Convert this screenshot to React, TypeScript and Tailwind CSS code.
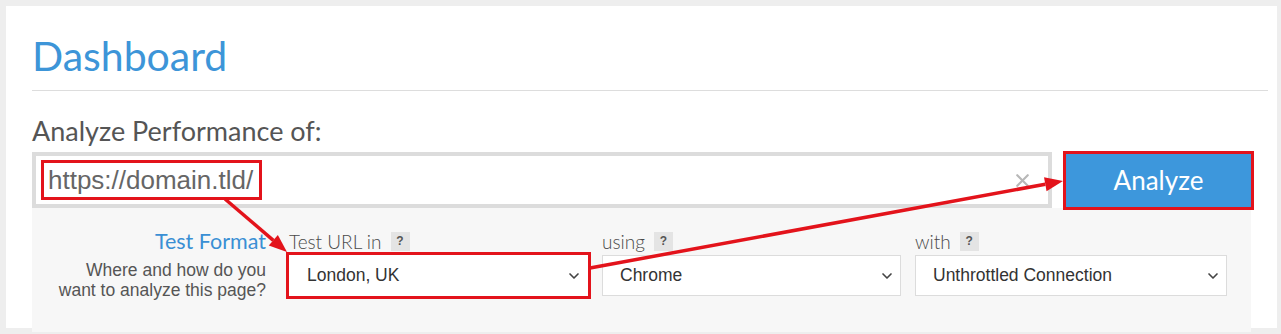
import { ChevronDown, X } from 'lucide-react';

const RED = '#e3131b';

function Help() {
  return (
    <span className="inline-flex items-center justify-center w-[19px] h-[19px] bg-[#e4e4e4] text-[#555] text-[12px] font-bold font-['Liberation_Sans',Arial,sans-serif] leading-none">
      ?
    </span>
  );
}

function Select({ label, value, width, marked }: { label: string; value: string; width: string; marked?: boolean }) {
  return (
    <div className={`flex flex-col gap-[4px] ${width}`}>
      <div className="flex items-center gap-[9px] h-[20px]">
        <span className="font-['Lato',sans-serif] font-light text-[19px] leading-none text-[#4a4a4a]">{label}</span>
        <Help />
      </div>
      <div
        className={`flex items-center justify-between h-[41px] bg-white pl-[17px] pr-[5px] ${
          marked ? 'outline-3 outline-[#e3131b] border border-transparent' : 'border border-[#dcdcdc]'
        }`}
      >
        <span className="font-['Liberation_Sans',Arial,sans-serif] text-[17.5px] text-[#333]">{value}</span>
        <ChevronDown size={16} strokeWidth={2.5} className="text-[#444]" />
      </div>
    </div>
  );
}

function Arrow({ x1, y1, x2, y2 }: { x1: number; y1: number; x2: number; y2: number }) {
  const a = Math.atan2(y2 - y1, x2 - x1);
  const len = 18;
  const w = 7;
  const bx = x2 - len * Math.cos(a);
  const by = y2 - len * Math.sin(a);
  const px = -Math.sin(a) * w;
  const py = Math.cos(a) * w;
  return (
    <g>
      <line x1={x1} y1={y1} x2={bx} y2={by} stroke={RED} strokeWidth={3.5} />
      <polygon points={`${x2},${y2} ${bx + px},${by + py} ${bx - px},${by - py}`} fill={RED} />
    </g>
  );
}

export default function App() {
  return (
    <div className="relative h-[334px] bg-[#eeeeee] pt-[6px] pl-[6px] pr-[4px] pb-[6px]">
      <div className="h-full bg-white pt-[29px] pl-[26px] pr-[26px]">
        <h1 className="font-['Lato',sans-serif] text-[41px] leading-none text-[#3d95d8]">Dashboard</h1>
        <div className="mt-[14px] h-px bg-[#dddddd] -mr-[17px]" />

        <div className="mt-[26px] font-['Lato',sans-serif] text-[27px] leading-none text-[#555]">
          Analyze Performance of:
        </div>

        <div className="mt-[8px] flex items-center">
          <div className="flex items-center justify-between w-[1020px] h-[56px] border-4 border-[#dcdcdc] bg-white pl-[8px] pr-[15px]">
            <span className="inline-block outline-3 outline-[#e3131b] pl-[4px] pr-[6px] py-[1px] font-['Liberation_Sans',Arial,sans-serif] text-[26px] leading-[32px] text-[#666]">
              https://domain.tld/
            </span>
            <X size={21} strokeWidth={2.5} className="text-[#b8b8b8]" />
          </div>
          <button className="ml-auto h-[53px] w-[185px] bg-[#3d97dc] outline-3 outline-[#e3131b] font-['Lato',sans-serif] text-[26px] text-white">
            Analyze
          </button>
        </div>

        <div className="flex bg-[#f7f7f7] pt-[23px] pb-[32px] pr-[24px]">
          <div className="w-[234px] text-right">
            <div className="font-['Lato',sans-serif] text-[21.5px] leading-none text-[#3a8fd4] h-[20px]">Test Format</div>
            <div className="mt-[9px] font-['Liberation_Sans',Arial,sans-serif] text-[17.5px] leading-[20px] text-[#555]">
              Where and how do you
              <br />
              want to analyze this page?
            </div>
          </div>
          <div className="ml-[23px] flex gap-[14px]">
            <Select label="Test URL in" value="London, UK" width="w-[299px]" marked />
            <Select label="using" value="Chrome" width="w-[299px]" />
            <Select label="with" value="Unthrottled Connection" width="w-[312px]" />
          </div>
        </div>
      </div>

      <svg className="absolute inset-0 pointer-events-none" width="1281" height="334">
        <Arrow x1={225} y1={199} x2={287} y2={252} />
        <Arrow x1={590} y1={268} x2={1063} y2={181} />
      </svg>
    </div>
  );
}
